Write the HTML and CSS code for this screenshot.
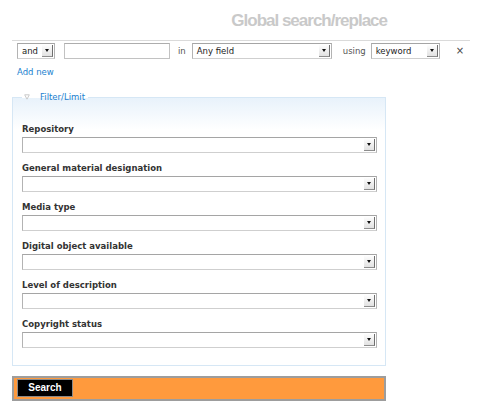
FILE: index.html
```html
<!DOCTYPE html>
<html>
<head>
<meta charset="utf-8">
<title>Global search/replace</title>
<link rel="stylesheet" href="styles.css">
</head>
<body>
<div class="page">
  <h1 class="title">Global search/replace</h1>
  <div class="criteria">
    <div class="row">
      <div class="sel sel-op"><span class="sel-text">and</span><span class="arrow"></span></div>
      <div class="textbox"></div>
      <span class="word w-in">in</span>
      <div class="sel sel-field"><span class="sel-text">Any field</span><span class="arrow"></span></div>
      <span class="word w-using">using</span>
      <div class="sel sel-using"><span class="sel-text">keyword</span><span class="arrow"></span></div>
      <span class="remove">&#215;</span>
    </div>
    <a class="add" href="#">Add new</a>
  </div>
  <fieldset class="filter">
    <legend class="legend"><svg class="toggle" width="6" height="6" viewBox="0 0 6 6"><path d="M0.7 0.8 L5.3 0.8 L3 5.2 Z" fill="none" stroke="#c9c9c9" stroke-width="1"/></svg><span class="legend-text">Filter/Limit</span></legend>
    <div class="group"><div class="label">Repository</div><div class="sel sel-wide"><span class="sel-text"></span><span class="arrow"></span></div></div>
    <div class="group"><div class="label">General material designation</div><div class="sel sel-wide"><span class="sel-text"></span><span class="arrow"></span></div></div>
    <div class="group"><div class="label">Media type</div><div class="sel sel-wide"><span class="sel-text"></span><span class="arrow"></span></div></div>
    <div class="group"><div class="label">Digital object available</div><div class="sel sel-wide"><span class="sel-text"></span><span class="arrow"></span></div></div>
    <div class="group"><div class="label">Level of description</div><div class="sel sel-wide"><span class="sel-text"></span><span class="arrow"></span></div></div>
    <div class="group"><div class="label">Copyright status</div><div class="sel sel-wide"><span class="sel-text"></span><span class="arrow"></span></div></div>
  </fieldset>
  <div class="actions"><button class="btn" type="button">Search</button></div>
</div>
</body>
</html>
```
FILE: styles.css
```css
body {
  margin: 0;
  background: #fff;
  color: #333;
  font-family: "DejaVu Sans", Verdana, sans-serif;
  font-size: 8.5px;
}
.page {
  padding-left: 12px;
}
.title {
  margin: 0;
  width: 375px;
  padding-top: 11px;
  text-align: right;
  font: bold 17px/20px "Liberation Sans", Arial, sans-serif;
  letter-spacing: -1px;
  color: #c9c9c9;
}
.criteria {
  width: 458px;
  margin-top: 9px;
  border-top: 1px solid #dadada;
  padding-top: 2px;
}
.row {
  display: flex;
  align-items: center;
  height: 16px;
  padding-left: 5px;
}
.sel {
  display: flex;
  align-items: center;
  height: 16px;
  box-sizing: border-box;
  border: 1px solid #b3b3b3;
  border-top-color: #a5a5a5;
  border-bottom-color: #cfcfcf;
  background: #fff;
}
.sel-text {
  flex: 1;
  padding-left: 4px;
  color: #222;
  white-space: nowrap;
  line-height: 12px;
}
.arrow {
  display: flex;
  align-items: center;
  justify-content: center;
  width: 11px;
  height: 12px;
  margin-right: 1px;
  box-sizing: border-box;
  background: linear-gradient(#fdfdfd, #e2e2e2);
  border-right: 1px solid #6f6f6f;
  border-bottom: 1px solid #8d8d8d;
}
.arrow::after {
  content: "";
  border-left: 2.5px solid transparent;
  border-right: 2.5px solid transparent;
  border-top: 3px solid #111;
}
.sel-op {
  width: 38px;
}
.textbox {
  width: 106px;
  height: 16px;
  margin-left: 9px;
  box-sizing: border-box;
  border: 1px solid #c2c2c2;
  border-top-color: #adadad;
  background: #fff;
}
.word {
  color: #555;
  line-height: 12px;
}
.w-in {
  margin-left: 8px;
}
.sel-field {
  width: 140px;
  margin-left: 6px;
}
.w-using {
  margin-left: 11px;
}
.sel-using {
  width: 69px;
  margin-left: 5px;
}
.remove {
  margin-left: 16px;
  color: #444;
  font-size: 10px;
  line-height: 12px;
}
.add {
  display: block;
  width: max-content;
  margin: 7px 0 0 5px;
  line-height: 12px;
  color: #1a7fcf;
  text-decoration: none;
}
.filter {
  margin: 13px 0 0;
  padding: 21px 8px 17px 9px;
  width: 374px;
  min-width: 0;
  box-sizing: border-box;
  border: 1px solid #d6e7f5;
  background: linear-gradient(#e8f2fb, #ffffff 32px);
}
.legend {
  display: flex;
  align-items: center;
  padding: 0 3px 0 2px;
  line-height: 12px;
  color: #1a7fcf;
}
.toggle {
  display: block;
}
.legend-text {
  margin-left: 10px;
}
.group + .group {
  margin-top: 10px;
}
.label {
  height: 11px;
  line-height: 11px;
  margin-bottom: 2px;
  font-weight: bold;
  color: #333;
  white-space: nowrap;
}
.sel-wide {
  width: 355px;
}
.actions {
  display: flex;
  align-items: flex-start;
  width: 374px;
  height: 25px;
  margin-top: 10px;
  padding: 1px 3px;
  box-sizing: border-box;
  background: #ff9a3d;
  border: 2px solid #9d9d9d;
}
.btn {
  width: 56px;
  height: 18px;
  margin: 0;
  padding: 0;
  background: #000;
  color: #fff;
  border: 1px solid #8a8a8a;
  font: bold 10px/16px "Liberation Sans", Arial, sans-serif;
  text-align: center;
}
```
